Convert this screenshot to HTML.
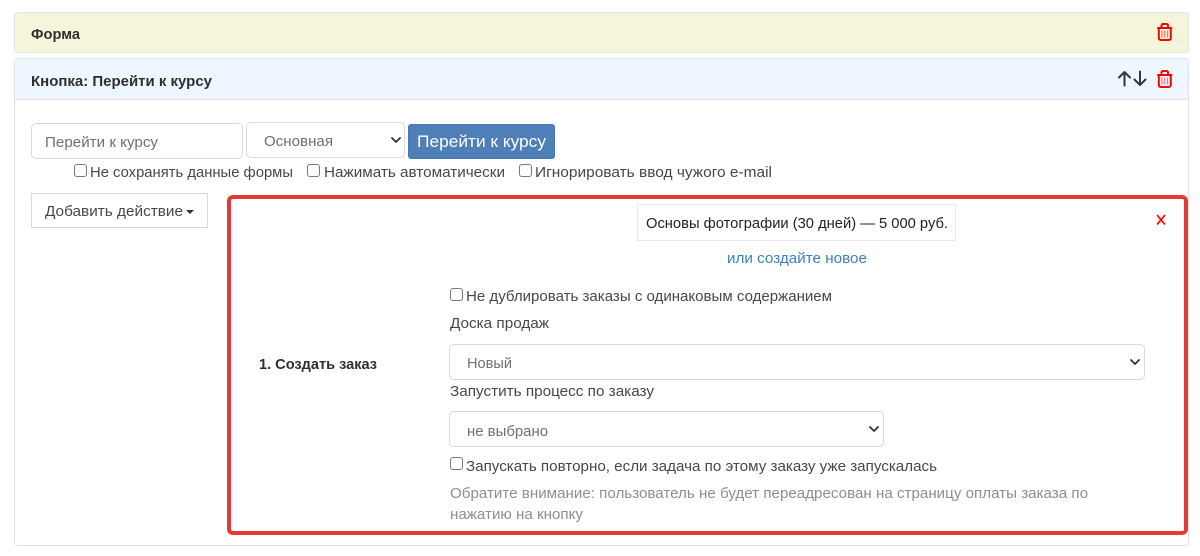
<!DOCTYPE html>
<html lang="ru">
<head>
<meta charset="utf-8">
<title>Форма</title>
<style>
html,body{margin:0;padding:0;background:#fff;}
body{width:1200px;height:556px;position:relative;overflow:hidden;font-family:"Liberation Sans",sans-serif;}
.b{position:absolute;box-sizing:border-box;}
.ctl{border:1px solid #d9d9d9;border-radius:5px;background:#fff;}
.cb{position:absolute;box-sizing:border-box;width:13px;height:13px;border:1px solid #7a7a7a;border-radius:3px;background:#fff;}
svg.t{position:absolute;left:0;top:0;}
svg.t text{font-family:"Liberation Sans",sans-serif;font-size:15px;fill:#484848;}
svg.t .s{font-weight:bold;fill:#2f2f2f;font-size:15px;}
svg.t .g{fill:#8e8e8e;}
svg.t .p{fill:#707070;}
</style>
</head>
<body>
<div class="b" style="left:14px;top:12px;width:1175px;height:41px;background:#f5f5dc;border:1px solid #e4e4e2;border-radius:4px;"></div>
<div class="b" style="left:14px;top:58px;width:1175px;height:488px;background:#fff;border:1px solid #e2e2e2;border-radius:4px;"></div>
<div class="b" style="left:15px;top:59px;width:1173px;height:41px;background:#eef7ff;border-bottom:1px solid #e0e3e6;border-radius:3px 3px 0 0;"></div>

<div class="b ctl" style="left:31px;top:123px;width:212px;height:36px;"></div>
<div class="b ctl" style="left:246px;top:122px;width:159px;height:36px;"></div>
<div class="b" style="left:408px;top:124px;width:147px;height:35px;background:#4f7fb9;border:1px solid #4a78b0;border-radius:3px;"></div>
<div class="b" style="left:31px;top:193px;width:177px;height:35px;background:#fff;border:1px solid #d9d9d9;"></div>

<div class="b" style="left:227px;top:195px;width:961px;height:340px;border:4px solid #e53a33;border-radius:6px;"></div>
<div class="b" style="left:637px;top:204px;width:319px;height:37px;background:#fff;border:1px solid #e8e8e8;"></div>
<div class="b ctl" style="left:449px;top:344px;width:696px;height:36px;"></div>
<div class="b ctl" style="left:449px;top:411px;width:435px;height:36px;"></div>

<div class="cb" style="left:74px;top:164px;"></div>
<div class="cb" style="left:307px;top:164px;"></div>
<div class="cb" style="left:519px;top:164px;"></div>
<div class="cb" style="left:450px;top:288px;"></div>
<div class="cb" style="left:450px;top:457px;"></div>

<svg class="t" width="1200" height="556" viewBox="0 0 1200 556" xmlns="http://www.w3.org/2000/svg">
<text class="s" x="31" y="39" textLength="49" lengthAdjust="spacingAndGlyphs">Форма</text>
<text class="s" x="31" y="86" textLength="181" lengthAdjust="spacingAndGlyphs">Кнопка: Перейти к курсу</text>
<text class="p" x="45" y="147" textLength="113" lengthAdjust="spacingAndGlyphs">Перейти к курсу</text>
<text class="p" x="264" y="146" textLength="69" lengthAdjust="spacingAndGlyphs">Основная</text>
<text x="417" y="147" textLength="129" lengthAdjust="spacingAndGlyphs" style="fill:#fff;font-size:17px">Перейти к курсу</text>
<text x="90" y="177" textLength="203" lengthAdjust="spacingAndGlyphs">Не сохранять данные формы</text>
<text x="324" y="177" textLength="181" lengthAdjust="spacingAndGlyphs">Нажимать автоматически</text>
<text x="535" y="177" textLength="237" lengthAdjust="spacingAndGlyphs">Игнорировать ввод чужого e-mail</text>
<text x="45" y="216" textLength="138" lengthAdjust="spacingAndGlyphs">Добавить действие</text>
<text x="646" y="228" textLength="302" lengthAdjust="spacingAndGlyphs" style="fill:#222">Основы фотографии (30 дней) — 5 000 руб.</text>
<text x="727" y="263" textLength="140" lengthAdjust="spacingAndGlyphs" style="fill:#3f7fc1">или создайте новое</text>
<text x="466" y="301" textLength="366" lengthAdjust="spacingAndGlyphs">Не дублировать заказы с одинаковым содержанием</text>
<text x="450" y="328" textLength="99" lengthAdjust="spacingAndGlyphs">Доска продаж</text>
<text class="s" x="259" y="369" textLength="118" lengthAdjust="spacingAndGlyphs">1. Создать заказ</text>
<text class="p" x="467" y="368" textLength="45" lengthAdjust="spacingAndGlyphs">Новый</text>
<text x="450" y="396" textLength="204" lengthAdjust="spacingAndGlyphs">Запустить процесс по заказу</text>
<text class="p" x="467" y="436" textLength="81" lengthAdjust="spacingAndGlyphs">не выбрано</text>
<text x="466" y="471" textLength="471" lengthAdjust="spacingAndGlyphs">Запускать повторно, если задача по этому заказу уже запускалась</text>
<text class="g" x="450" y="498" textLength="638" lengthAdjust="spacingAndGlyphs">Обратите внимание: пользователь не будет переадресован на страницу оплаты заказа по</text>
<text class="g" x="450" y="519" textLength="133" lengthAdjust="spacingAndGlyphs">нажатию на кнопку</text>

<!-- chevrons -->
<g fill="none" stroke="#333" stroke-width="1.800" stroke-linecap="round" stroke-linejoin="round">
<path d="M392 138l4 4 4-4"/>
<path d="M1131 360l4 4 4-4"/>
<path d="M870 427l4 4 4-4"/>
</g>
<!-- caret -->
<path d="M186 210h8l-4 4z" fill="#333"/>
<!-- close -->
<path d="M1157 215l8 9.500M1165 215l-8 9.500" stroke="#f00" stroke-width="1.700" fill="none"/>
<!-- arrows -->
<g fill="none" stroke="#2b3a42" stroke-width="2" stroke-linecap="round" stroke-linejoin="round">
<path d="M1124.500 85.500V72M1119 77.500l5.500-5.500 5.500 5.500"/>
<path d="M1140 71.500V85M1134.500 79.500l5.500 5.500 5.500-5.500"/>
</g>
<!-- trash icons -->
<g fill="none" stroke="#f00" stroke-width="2" stroke-linejoin="round" stroke-linecap="round">
<path d="M1158 28h13.500M1161.500 27.500V25.500a1.500 1.500 0 0 1 1.500-1.500h3.500a1.500 1.500 0 0 1 1.500 1.500v2"/>
<path d="M1158.800 28v10a2 2 0 0 0 2 2h8a2 2 0 0 0 2-2V28"/>
</g>
<path d="M1162 30.500v7M1164.800 30.500v7M1167.500 30.500v7" stroke="#f00" stroke-width="1.200" opacity=".55" fill="none"/>
<g fill="none" stroke="#f00" stroke-width="2" stroke-linejoin="round" stroke-linecap="round">
<path d="M1158 75h13.500M1161.500 74.500V72.500a1.500 1.500 0 0 1 1.500-1.500h3.500a1.500 1.500 0 0 1 1.500 1.500v2"/>
<path d="M1158.800 75v10a2 2 0 0 0 2 2h8a2 2 0 0 0 2-2V75"/>
</g>
<path d="M1162 77.500v7M1164.800 77.500v7M1167.500 77.500v7" stroke="#f00" stroke-width="1.200" opacity=".55" fill="none"/>
</svg>
</body>
</html>
